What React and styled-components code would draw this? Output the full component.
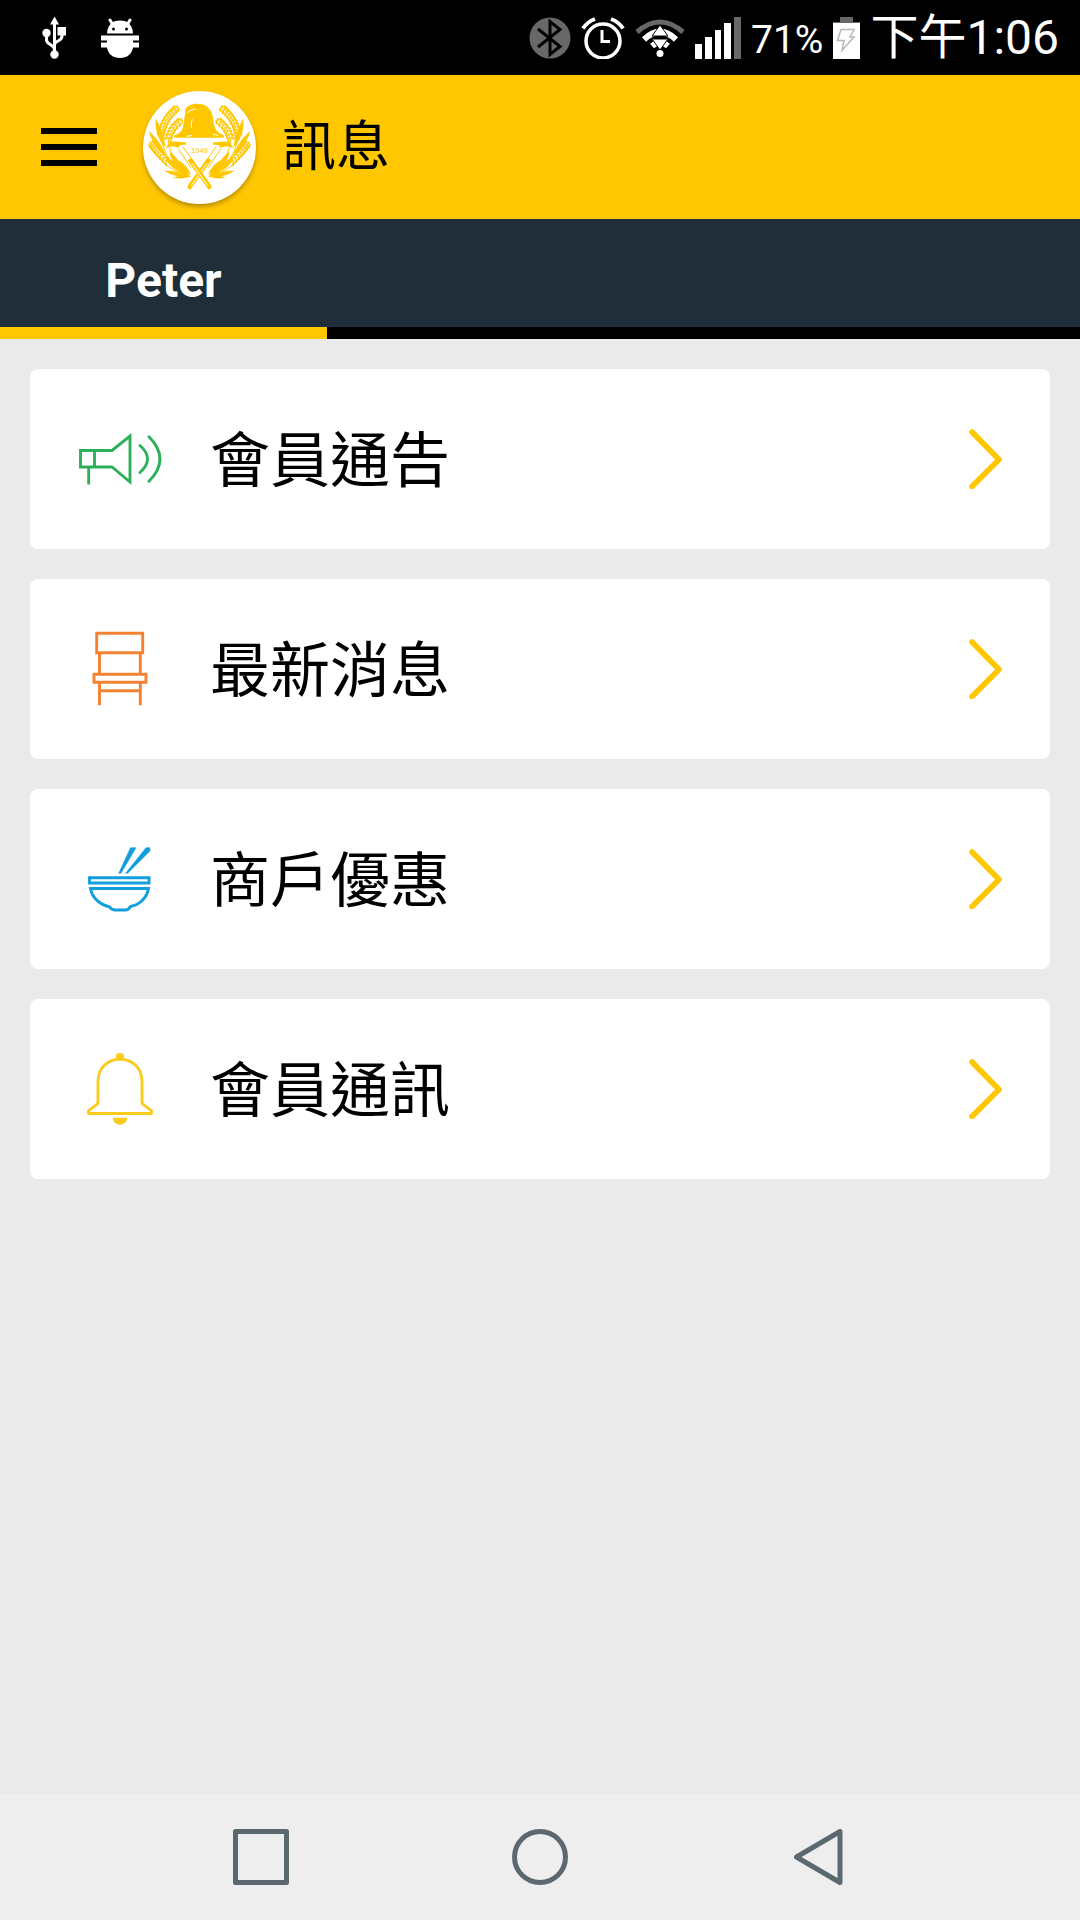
import React from "react";
import styled, { createGlobalStyle } from "styled-components";

const color = {
  amber: "#ffc700",
  navy: "#1f2e38",
  page: "#eaeaea",
  nav: "#eeeeee",
  navIcon: "#5c6870",
  green: "#2eb05a",
  orange: "#f58233",
  blue: "#109fdc",
  yellow: "#fbcc1e",
};

const GlobalStyle = createGlobalStyle`
  *, *::before, *::after { box-sizing: border-box; }
  body {
    margin: 0;
    background: ${color.page};
    font-family: Roboto, "Noto Sans CJK TC", sans-serif;
    color: #000;
  }
  svg { display: block; flex: none; }
`;

const Screen = styled.div`
  min-height: 100vh;
  display: flex;
  flex-direction: column;
`;

const StatusBar = styled.div`
  height: 75px;
  padding: 0 21px 0 40px;
  display: flex;
  align-items: center;
  justify-content: space-between;
  background: #000;
  color: #fff;
`;

const StatusGroup = styled.div`
  display: flex;
  align-items: center;
  gap: ${(p) => p.$gap}px;
`;

const BatteryLevel = styled.span`
  font-size: 39px;
  line-height: 44px;
  padding-top: 4px;
`;

const Clock = styled.time`
  font-size: 48px;
  line-height: 56px;
`;

const AppBar = styled.header`
  height: 144px;
  padding: 0 32px;
  display: flex;
  align-items: center;
  background: ${color.amber};
`;

const MenuButton = styled.button`
  padding: 9px;
  border: 0;
  background: none;
  color: #000;
`;

const Logo = styled.div`
  margin: 0 26px 0 37px;
  border-radius: 50%;
  background: #fff;
  box-shadow: 0 3px 4px rgba(110, 80, 0, 0.45);
`;

const Title = styled.h1`
  margin: 0;
  padding-top: 2px;
  font-size: 54px;
  line-height: 64px;
  font-weight: 400;
`;

const Tabs = styled.nav`
  display: flex;
  background: linear-gradient(${color.navy} 108px, #000 108px);
`;

const Tab = styled.button`
  width: 327px;
  height: 120px;
  padding: 16px 0 0;
  border: 0;
  border-bottom: 12px solid ${color.amber};
  background: none;
  color: #fff;
  font-family: inherit;
  font-size: 48px;
  line-height: 56px;
  font-weight: 700;
`;

const List = styled.main`
  flex: 1;
  padding: 30px;
  display: flex;
  flex-direction: column;
  gap: 30px;
`;

const Card = styled.a`
  height: 180px;
  padding: 0 45px;
  display: flex;
  align-items: center;
  gap: 45px;
  border-radius: 8px;
  background: #fff;
  color: #000;
  text-decoration: none;
`;

const CardLabel = styled.span`
  flex: 1;
  padding-top: 6px;
  font-size: 60px;
  line-height: 72px;
`;

const NavBar = styled.footer`
  height: 126px;
  padding: 0 121px;
  display: grid;
  grid-template-columns: repeat(3, 1fr);
  background: ${color.nav};
`;

const NavButton = styled.button`
  padding: 0;
  border: 0;
  display: flex;
  align-items: center;
  justify-content: center;
  background: none;
  color: ${color.navIcon};
`;

const UsbIcon = () => (
  <svg width="28" height="44" viewBox="0 0 28 44" fill="none" stroke="#fff" strokeWidth="3">
    <path d="M14.500 8V39M6.500 17v7c0 5 8 4 8 10M22 17v3c0 6-7.500 4-7.500 9" />
    <g fill="#fff" stroke="none">
      <path d="M14.500 0.500l4.500 8h-9z" />
      <circle cx="6.500" cy="17" r="4.200" />
      <rect x="17.500" y="11" width="8.500" height="8.500" />
      <circle cx="14.500" cy="38.500" r="4.200" />
    </g>
  </svg>
);

const BugIcon = () => (
  <svg width="38" height="40" viewBox="0 0 38 40">
    <g fill="#fff">
      <path d="M6 15.500C6.500 7 11 2.500 19 2.500S31.500 7 32 15.500z" />
      <path d="M0 17.500h38v5h-6v2h6v5h-6c-1 6.500-6 10.500-13 10.500S7 36 6 29.500H0v-5h6v-2H0z" />
    </g>
    <path d="M9 2l3 5M29 2l-3 5" stroke="#fff" strokeWidth="3" strokeLinecap="round" />
    <circle cx="12.500" cy="11" r="1.500" />
    <circle cx="25.500" cy="11" r="1.500" />
  </svg>
);

const BluetoothIcon = () => (
  <svg width="42" height="42" viewBox="0 0 42 42">
    <circle cx="21" cy="21" r="20.500" fill="#686868" />
    <path d="M9 12l22 17.500-10 8v-33l10 8L9 30" fill="none" stroke="#000" strokeWidth="3" />
  </svg>
);

const AlarmIcon = () => (
  <svg width="44" height="42" viewBox="0 0 44 42" fill="none" stroke="#fff">
    <circle cx="22" cy="24" r="17" strokeWidth="3.500" />
    <path d="M21 13v11.500h8" strokeWidth="3" />
    <path d="M2 11.500Q6 5 14 2M30 2Q38 5 42 11.500" strokeWidth="4" />
  </svg>
);

const WifiIcon = () => (
  <svg width="50" height="40" viewBox="0 0 50 40" fill="none">
    <path d="M2 14Q25-6 48 14" stroke="#686868" strokeWidth="5" />
    <path d="M9 21.500Q25 6 41 21.500M17 28Q25 21 33 28" stroke="#fff" strokeWidth="6" />
    <path d="M25 7l8 11H17zM17 21h16l-8 11z" fill="#fff" stroke="#000" strokeWidth="1" />
    <circle cx="25" cy="35.500" r="3.500" fill="#fff" />
  </svg>
);

const SignalIcon = () => (
  <svg width="46" height="42" viewBox="0 0 46 42" fill="#fff">
    <path d="M0 27h7v15H0zM10 20h7v22h-7zM20 13h6v29h-6zM29 6h7v36h-7z" />
    <path d="M39 0h7v42h-7z" fill="#686868" />
  </svg>
);

const BatteryIcon = () => (
  <svg width="27" height="42" viewBox="0 0 27 42">
    <path d="M7 0h13v5h7v3H0V5h7z" fill="#686868" />
    <path d="M0 6h27v36H0z" fill="#fff" />
    <path d="M8 12.500h13l-4 7.500h4L9 33.500l2-10H4.500z" fill="none" stroke="#b8b8b8" strokeWidth="1.500" />
  </svg>
);

const MenuIcon = () => (
  <svg width="56" height="38" viewBox="0 0 56 38" fill="currentColor">
    <path d="M0 0h56v6H0zM0 16h56v6H0zM0 32h56v6H0z" />
  </svg>
);

const ears = [
  { x: 92, y: 162, dx: 46, dy: -80, bend: -7, n: 10 },
  { x: 114, y: 176, dx: 36, dy: -56, bend: -5, n: 7 },
  { x: 112, y: 244, dx: -48, dy: -54, bend: -4, n: 8 },
];

const Ear = ({ x, y, dx, dy, bend, n }) => {
  const turn = (Math.atan2(dy, dx) * 180) / Math.PI;
  return Array.from({ length: n }, (_, i) => {
    const t = i / (n - 1);
    const cx = x + dx * t + bend * Math.sin(Math.PI * t);
    const cy = y + dy * t + bend * Math.sin(Math.PI * t) * 0.6;
    return (
      <g key={i} transform={`translate(${cx} ${cy}) rotate(${turn})`}>
        <ellipse cx="0" cy="-8" rx="7" ry="3.600" transform="rotate(24 0 -8)" />
        <ellipse cx="5" cy="0" rx="5" ry="3" />
        <ellipse cx="0" cy="8" rx="7" ry="3.600" transform="rotate(-24 0 8)" />
      </g>
    );
  });
};

const Wheat = () => (
  <g>
    {ears.map((ear) => (
      <Ear key={ear.x} {...ear} />
    ))}
    <path d="M76 112c-2 30 3 62 30 88-5-32-14-60-30-88zM56 150c6 28 22 52 50 70-12-28-28-50-50-70z" />
    <path d="M118 212c2 26 18 48 56 68-14-26-34-48-56-68zM104 226c8 28 34 46 72 60-20-26-44-44-72-60zM102 270c26 18 52 20 78 16-24-12-50-16-78-16zM128 290c20 6 38 4 56-4-18-4-38-2-56 4zM148 240c2 18 14 32 34 42-6-18-18-32-34-42z" />
    <path d="M92 160c2 50 34 104 84 124M113 172c4 44 28 88 66 112M62 194c22 46 66 82 116 92" fill="none" stroke={color.amber} strokeWidth="3" />
  </g>
);

const Hammer = () => (
  <g>
    <path d="M140 198l16-9 88 129q0 9-10 9z" fill="#fff" />
    <path d="M106 202c6-12 16-20 28-20l34 3v6l-18 2-6 8-12-4c-10-1-16 1-26 5z" />
    <path d="M144 204l38 57M158 197l34 50" fill="none" stroke={color.amber} strokeWidth="3" />
    <path d="M172 238l12-7 60 84q2 10-9 11z" />
    <path d="M186 248l47 67" stroke="#fff" strokeWidth="3" />
  </g>
);

const Emblem = () => (
  <svg width="113" height="113" viewBox="38 30 340 340" fill={color.amber} role="img" aria-label="1949">
    <Wheat />
    <g transform="translate(416 0) scale(-1 1)">
      <Wheat />
      <Hammer />
    </g>
    <Hammer />
    <path
      d="M131 164c18-6 27-16 29-34l5-34c-2-8 2-17 12-22 15-8 43-8 56 5 14 13 16 32 18 48 3 18 12 30 30 36q3 6-3 8H135q-6-2-4-7z"
      stroke="#fff"
      strokeWidth="6"
      paintOrder="stroke"
    />
    <path d="M172 94q10-8 24-10M186 116q-6 12-2 24M170 166l14-2M250 160l14 4" fill="none" stroke="#fff" strokeWidth="3" strokeLinecap="round" />
    <text x="208" y="217" textAnchor="middle" fontSize="23" fontFamily="Liberation Sans, sans-serif">1949</text>
  </svg>
);

const LineIcon = ({ tint, children }) => (
  <svg width="90" height="90" viewBox="0 0 90 90" fill="none" stroke={tint} strokeWidth="2.900">
    {children}
  </svg>
);

const MegaphoneIcon = () => (
  <LineIcon tint={color.green}>
    <path d="M5.500 36.500H37L55 22V68L37 53H5.500zM19.500 36.500V53M13.700 53V70.500" />
    <path d="M65 31.500Q80 45 65 58.500M74 22.700Q96 45 74 67.300" strokeLinecap="round" />
  </LineIcon>
);

const ChairIcon = () => (
  <LineIcon tint={color.orange}>
    <path d="M21.700 9.300h46v19.400h-46zM19 50.300h52v8H19z" />
    <path d="M24.500 28.700v21.600M65.300 28.700v21.600M24.500 58.300v23M65.300 58.300v23M24.500 66.700h40.800" />
  </LineIcon>
);

const BowlIcon = () => (
  <LineIcon tint={color.blue}>
    <path d="M14.500 43.700H74V49H14.500zM15.500 54.500H73.500C72 64 64 71 55.500 72.500Q53.500 76 50.500 76H40Q37 76 34.500 72.800C25 70.500 17 64 15.500 54.500z" />
    <path d="M55.500 13.700H61L46 39.300h-2.300zM71 13.700h4V17L52.700 39.300h-2.200z" fill={color.blue} stroke={color.blue} strokeWidth="0.500" />
  </LineIcon>
);

const BellIcon = () => (
  <LineIcon tint={color.yellow}>
    <path d="M45 15.300C32 15.300 23 24.300 23 37.300V59.300L13.500 66.800V69.500H76.500V66.800L67 59.300V37.300C67 24.300 58 15.300 45 15.300z" strokeLinejoin="round" />
    <path d="M41 15V11.800Q41 9.300 43.500 9.300h3Q49 9.300 49 11.800V15zM37.500 73.700h15Q51 80.700 45 80.700T37.500 73.700z" fill={color.yellow} stroke="none" />
  </LineIcon>
);

const Chevron = () => (
  <svg width="36" height="60" viewBox="0 0 36 60" fill="none" stroke={color.amber} strokeWidth="5.600" strokeLinecap="round" strokeLinejoin="round">
    <path d="M3 3L30 30.500L3 57.500" />
  </svg>
);

const NavIcon = ({ children }) => (
  <svg width="56" height="56" viewBox="0 0 56 56" fill="none" stroke="currentColor" strokeWidth="5" strokeLinejoin="round">
    {children}
  </svg>
);

const items = [
  { label: "會員通告", Icon: MegaphoneIcon },
  { label: "最新消息", Icon: ChairIcon },
  { label: "商戶優惠", Icon: BowlIcon },
  { label: "會員通訊", Icon: BellIcon },
];

export default function App() {
  return (
    <Screen lang="zh-Hant">
      <GlobalStyle />
      <StatusBar>
        <StatusGroup $gap={33}>
          <UsbIcon />
          <BugIcon />
        </StatusGroup>
        <StatusGroup $gap={10}>
          <BluetoothIcon />
          <AlarmIcon />
          <WifiIcon />
          <SignalIcon />
          <BatteryLevel>71%</BatteryLevel>
          <BatteryIcon />
          <Clock>下午1:06</Clock>
        </StatusGroup>
      </StatusBar>
      <AppBar>
        <MenuButton type="button" aria-label="選單">
          <MenuIcon />
        </MenuButton>
        <Logo>
          <Emblem />
        </Logo>
        <Title>訊息</Title>
      </AppBar>
      <Tabs>
        <Tab type="button">Peter</Tab>
      </Tabs>
      <List>
        {items.map(({ label, Icon }) => (
          <Card key={label} href="#">
            <Icon />
            <CardLabel>{label}</CardLabel>
            <Chevron />
          </Card>
        ))}
      </List>
      <NavBar>
        <NavButton type="button" aria-label="最近">
          <NavIcon>
            <rect x="2.500" y="2.500" width="51" height="51" />
          </NavIcon>
        </NavButton>
        <NavButton type="button" aria-label="主頁">
          <NavIcon>
            <circle cx="28" cy="28" r="25.500" />
          </NavIcon>
        </NavButton>
        <NavButton type="button" aria-label="返回">
          <NavIcon>
            <path d="M49 2.500V53.500L5.500 28z" />
          </NavIcon>
        </NavButton>
      </NavBar>
    </Screen>
  );
}
